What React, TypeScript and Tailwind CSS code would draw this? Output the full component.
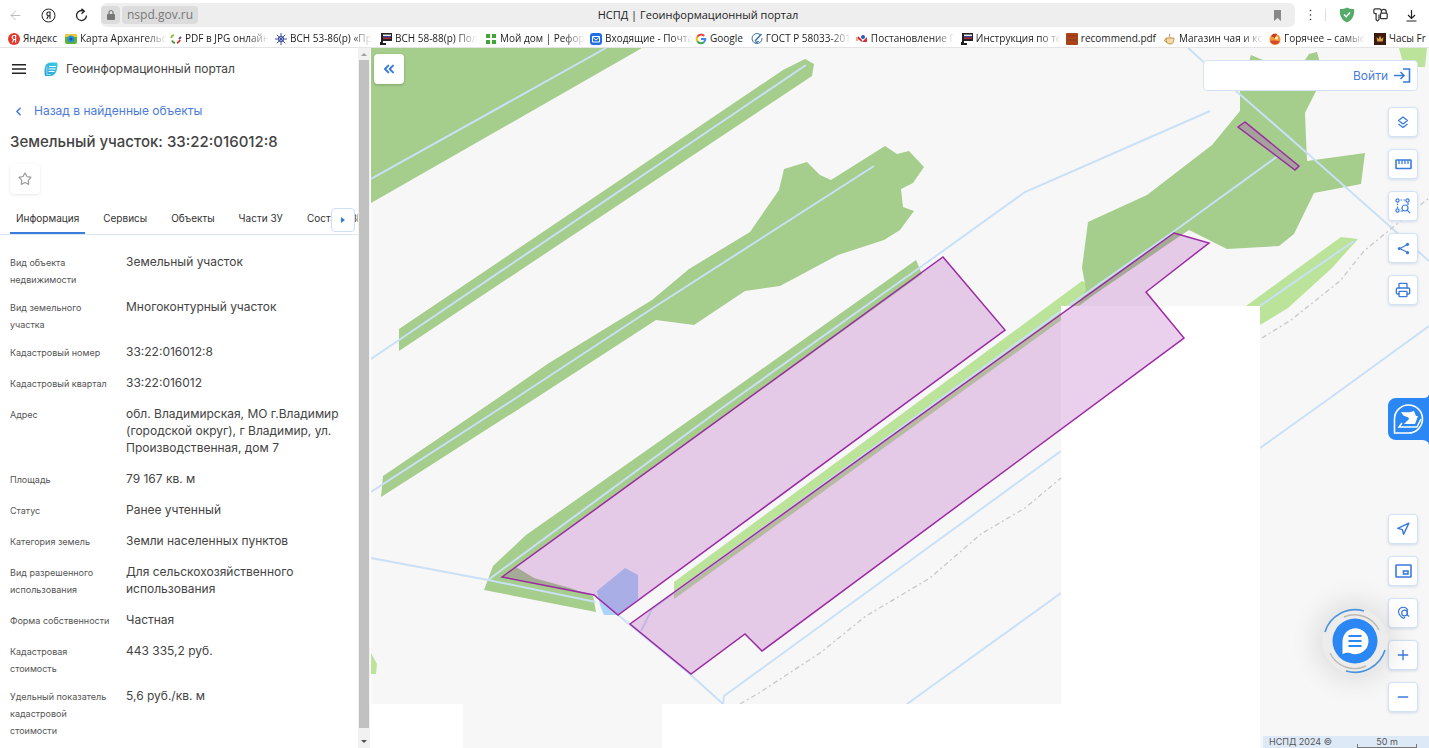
import type { ReactNode } from 'react';
import { ArrowLeft, ChevronLeft, ChevronsLeft, Minus, Navigation, Plus, Printer, Star } from 'lucide-react';

const MARK = 'w-3 h-3 shrink-0';

const bookmarks: { label: string; full?: boolean; icon: ReactNode }[] = [
  {
    label: 'Яндекс',
    full: true,
    icon: (
      <svg className={MARK} viewBox="0 0 12 12"><circle cx="6" cy="6" r="6" fill="#e5392f" /><path d="M7.600 9.600V2.500H6.400C5 2.500 4.200 3.300 4.200 4.400c0 1.100.6 1.700 1.700 2.100h1.700M5.900 6.500 4.200 9.600" fill="none" stroke="#fff" strokeWidth="1.100" /></svg>
    ),
  },
  {
    label: 'Карта Архангельс',
    icon: (
      <svg className={MARK} viewBox="0 0 12 12"><rect y="1" width="12" height="10" rx="2" fill="#5cb531" /><path d="M0 3a2 2 0 0 1 2-2h8a2 2 0 0 1 2 2v1H0z" fill="#f0c93a" /><circle cx="6" cy="6" r="3.500" fill="#2c8ed6" /><circle cx="6" cy="6" r="1.500" fill="#1958a8" /></svg>
    ),
  },
  {
    label: 'PDF в JPG онлайн',
    icon: (
      <svg className={MARK} viewBox="0 0 12 12" fill="none" strokeWidth="2"><path d="M1 5a4 4 0 0 1 3-3" stroke="#8bc53f" /><path d="M2 7.500A4 4 0 0 0 5 10" stroke="#3f9c35" /><path d="M7 10a5 5 0 0 0 3-3" stroke="#d8322f" /><path d="M9 6l2-2" stroke="#6a4ba0" /></svg>
    ),
  },
  {
    label: 'ВСН 53-86(р) «Пр',
    icon: (
      <svg className={MARK} viewBox="0 0 12 12" fill="none" stroke="#3f51a3"><path d="M6 0v12M0 6h12M1.800 1.800l8.400 8.400M10.200 1.800l-8.400 8.400" /><circle cx="6" cy="6" r="2.700" /></svg>
    ),
  },
  { label: 'ВСН 58-88(р) Пол', icon: <FlagMark /> },
  {
    label: 'Мой дом | Рефор',
    icon: (
      <svg className={MARK} viewBox="0 0 12 12" fill="#3fa535"><path d="M1 1h4v4H1zM7 1h4v4H7zM1 7h4v4H1zM7 7h4v4H7z" /></svg>
    ),
  },
  {
    label: 'Входящие - Почта',
    icon: (
      <svg className={MARK} viewBox="0 0 12 12"><rect width="12" height="12" rx="3" fill="#1f6fe5" /><path d="M2.500 3.500h7v5.500h-7zM2.500 4l3.500 3 3.500-3" fill="none" stroke="#fff" /></svg>
    ),
  },
  {
    label: 'Google',
    full: true,
    icon: (
      <svg className={MARK} viewBox="0 0 12 12" fill="none" strokeWidth="2"><path d="M9.200 3A4.200 4.200 0 0 0 2.400 3.800" stroke="#ea4335" /><path d="M2.400 3.800a4.200 4.200 0 0 0 0 4.400" stroke="#fbbc05" /><path d="M2.400 8.200A4.200 4.200 0 0 0 8.800 9.200" stroke="#34a853" /><path d="M8.800 9.200A4.200 4.200 0 0 0 10.200 6H6" stroke="#4285f4" /></svg>
    ),
  },
  {
    label: 'ГОСТ Р 58033-201',
    icon: (
      <svg className={MARK} viewBox="0 0 12 12" fill="none" stroke="#3a6ea8"><path d="M9 1.500a5 5 0 1 0 2 3.500" /><path d="m4 8 6.500-7M4.500 9c1 .5 2.500 0 3-1" strokeWidth="1.400" /></svg>
    ),
  },
  {
    label: 'Постановление Г',
    icon: (
      <svg className={MARK} viewBox="0 0 12 12"><path d="M0 4h2v4H0z" fill="#f3a08c" /><path d="M2 3l4 4v2L2 6z" fill="#cf2c2c" /><circle cx="7" cy="4" r="2" fill="#2a5bb8" /><path d="M6 9l5-5v5z" fill="#d12f3c" /></svg>
    ),
  },
  { label: 'Инструкция по те', icon: <FlagMark /> },
  {
    label: 'recommend.pdf',
    full: true,
    icon: <svg className={MARK} viewBox="0 0 12 12"><rect y="0" width="12" height="12" rx="1" fill="#a9441c" /><path d="M1 3h10M1 7h10" stroke="#8f3616" /></svg>,
  },
  {
    label: 'Магазин чая и ко',
    icon: (
      <svg className={MARK} viewBox="0 0 12 12"><path d="M2 5h8c0 4-1 6-4 6S2 9 2 5z" fill="#f4d9a8" stroke="#b9812f" strokeWidth=".8" /><path d="M2.500 6C0 5.500 0 9 3 9" fill="none" stroke="#b9812f" /><path d="M5 1c2 1-1 2 1 3.500" fill="none" stroke="#c66b3d" /></svg>
    ),
  },
  {
    label: 'Горячее – самые',
    icon: (
      <svg className={MARK} viewBox="0 0 12 12"><circle cx="6" cy="6.500" r="5.500" fill="#f39a32" /><path d="M1 8c3-1 7 0 10 0a5.500 5.500 0 0 1-10 0z" fill="#d9482b" /><path d="M2 3c2-3 5-3 6-2L6 5z" fill="#c83b26" /><circle cx="7.500" cy="5" r="1.500" fill="#fff3d6" /></svg>
    ),
  },
  {
    label: 'Часы Fr',
    full: true,
    icon: (
      <svg className={MARK} viewBox="0 0 12 12"><rect width="12" height="12" fill="#3d1a10" /><path d="M2.500 4 4.500 6 6 2.500 7.500 6l2-2-.8 4.500H3.300z" fill="#d7a445" /></svg>
    ),
  },
];

const tabs = ['Информация', 'Сервисы', 'Объекты', 'Части ЗУ', 'Состав ЕЗП'];

const details = [
  ['Вид объекта недвижимости', 'Земельный участок'],
  ['Вид земельного участка', 'Многоконтурный участок'],
  ['Кадастровый номер', '33:22:016012:8'],
  ['Кадастровый квартал', '33:22:016012'],
  ['Адрес', 'обл. Владимирская, МО г.Владимир (городской округ), г Владимир, ул. Производственная, дом 7'],
  ['Площадь', '79 167 кв. м'],
  ['Статус', 'Ранее учтенный'],
  ['Категория земель', 'Земли населенных пунктов'],
  ['Вид разрешенного использования', 'Для сельскохозяйственного использования'],
  ['Форма собственности', 'Частная'],
  ['Кадастровая стоимость', '443 335,2 руб.'],
  ['Удельный показатель кадастровой стоимости', '5,6 руб./кв. м'],
];

function FlagMark() {
  return (
    <svg className={MARK} viewBox="0 0 12 12"><path d="M1 0h11v8H3v2h3v2H0V9h1z" fill="#222" /><path d="M3 1.500h8v1.500H3z" fill="#e8e8ee" /><path d="M3 3h8v1.500H3z" fill="#384a9c" /><path d="M3 4.500h8V6H3z" fill="#b52a3b" /></svg>
  );
}

const BrowserBar = () => (
  <header className="shrink-0 bg-white border-b border-[#e4e4e4] font-['Open_Sans','Noto_Sans',sans-serif] text-[#222]">
    <div className="flex items-center h-[30px] pl-2">
      <button aria-label="Назад" className="w-4 text-[#b9b9b9]"><ArrowLeft size={15} strokeWidth={1.500} /></button>
      <button aria-label="Яндекс" className="ml-[17px] w-4">
        <svg width="15" height="15" viewBox="0 0 15 15" fill="none" stroke="#222"><circle cx="7.500" cy="7.500" r="6.500" /><path d="M9 11V4H7.800C6.500 4 5.800 4.800 5.800 5.900c0 1 .7 1.800 2 1.800H9M7.500 7.800 5.700 11" strokeWidth="1.100" /></svg>
      </button>
      <button aria-label="Обновить" className="ml-[17px] w-4">
        <svg width="15" height="15" viewBox="0 0 15 15" fill="none" stroke="#222" strokeWidth="1.300"><path d="M10 3.200A5 5 0 1 0 12.500 7.500M7.500 .8 10.300 3.300 7.500 5.800" /></svg>
      </button>
      <div className="relative flex items-center flex-1 min-w-0 h-6 ml-[11px] rounded-md bg-[#eee] text-xs">
        <span className="flex items-center justify-center w-[19px] h-[18px] rounded bg-[#dcdcdc]">
          <svg width="10" height="12" viewBox="0 0 10 12"><rect x="1" y="5" width="8" height="6" rx="1" fill="#777" /><path d="M3 5V3.500a2 2 0 0 1 4 0V5" fill="none" stroke="#777" strokeWidth="1.200" /></svg>
        </span>
        <span className="ml-0.5 px-[5px] h-[18px] leading-[18px] rounded bg-[#dcdcdc] text-[#777]">nspd.gov.ru</span>
        <h1 className="absolute inset-x-0 text-center text-[11px] pointer-events-none">НСПД | Геоинформационный портал</h1>
        <button aria-label="В закладки" className="ml-auto mr-[13px]">
          <svg width="9" height="11" viewBox="0 0 9 11" fill="#888"><path d="M1 0h7v11L4.500 8 1 11z" /></svg>
        </button>
      </div>
      <button aria-label="Меню" className="ml-[13px]">
        <svg width="5" height="12" viewBox="0 0 5 12" fill="#333"><circle cx="2.500" cy="1.500" r=".8" /><circle cx="2.500" cy="6" r=".8" /><circle cx="2.500" cy="10.500" r=".8" /></svg>
      </button>
      <span className="w-px h-3 ml-3 bg-[#ddd]" />
      <button aria-label="Защита" className="ml-[13px]">
        <svg width="16" height="16" viewBox="0 0 16 16"><path d="M8 .5c2 1 4.500 1.500 7 1.500 1 6-2 11.500-7 13.500C3 13.500 0 8 1 2 3.500 2 6 1.500 8 .5z" fill="#55ab68" /><path d="m5 7.500 2.200 2.300L11 5.500" fill="none" stroke="#fff" strokeWidth="1.400" /></svg>
      </button>
      <button aria-label="Пароли" className="ml-[18px]">
        <svg width="15" height="14" viewBox="0 0 15 14" fill="none" stroke="#333" strokeWidth="1.200"><path d="M8.500 2.800C8 1.500 7.500.8 6.500.8H2.300C1.400.8.8 1.500.8 2.300v2c0 .8.6 1.400 1.400 1.400h.9v6l1.400 1.300L6 11.500V6.500" /><path d="M8.300 5V3.800a2.500 2.500 0 0 1 5 0V5" /><rect x="7.500" y="5.200" width="6.700" height="5.500" rx="1" /></svg>
      </button>
      <button aria-label="Загрузки" className="ml-[18px] mr-[12px]">
        <svg width="11" height="13" viewBox="0 0 11 13" fill="none" stroke="#222" strokeWidth="1.200"><path d="M5.500 1v8M2 6l3.500 3.500L9 6M.5 12h10" /></svg>
      </button>
    </div>
    <nav className="flex items-center gap-2 h-[17px] pl-2 overflow-hidden text-[10px] leading-[17px]">
      {bookmarks.map((b) => (
        <a key={b.label} href="#" className={b.full ? 'flex items-center gap-[3px] shrink-0' : 'flex items-center gap-[3px] shrink-0 w-[97px]'}>
          {b.icon}
          <span className={b.full ? 'whitespace-nowrap' : 'whitespace-nowrap [mask-image:linear-gradient(to_right,black_75%,transparent)]'}>{b.label}</span>
        </a>
      ))}
    </nav>
  </header>
);

const Sidebar = () => (
  <aside className="flex shrink-0 w-[371px] bg-white text-[#444]">
    <div className="flex-1 min-w-0 overflow-hidden">
      <div className="flex items-center h-[42px] pl-3 text-xs">
        <button aria-label="Меню">
          <svg width="14" height="10" viewBox="0 0 14 10" fill="#222"><path d="M0 0h14v1.500H0zM0 4.200h14v1.500H0zM0 8.400h14v1.500H0z" /></svg>
        </button>
        <svg className="ml-[18px]" width="14" height="15" viewBox="0 0 14 15">
          <defs><linearGradient id="brand" x1="0" y1="1" x2="1" y2="0"><stop stopColor="#2d9cdb" /><stop offset="1" stopColor="#38d0e6" /></linearGradient></defs>
          <path d="M1 5c.8-3 3-4.500 6-4.500h6c1 2 .5 4 0 6-.4 4-2.500 7-6.500 7.500H1C.3 11 .3 8 1 5z" fill="url(#brand)" />
          <path d="M5 4.500h7M4.500 7h7M4.500 9.500h6" stroke="#fff" strokeWidth="1.100" />
          <path d="M2.800 4.500v8h4" stroke="#bfe8f7" strokeWidth=".8" fill="none" />
        </svg>
        <span className="ml-2">Геоинформационный портал</span>
      </div>
      <a href="#" className="flex items-center h-[42px] pl-3 text-xs text-[#4b7bdc]">
        <ChevronLeft size={13} strokeWidth={3} />
        <span className="ml-[9px]">Назад в найденные объекты</span>
      </a>
      <h2 className="pl-[10px] text-[15px] leading-5 font-medium">Земельный участок: 33:22:016012:8</h2>
      <button aria-label="В избранное" className="flex items-center justify-center w-[30px] h-[30px] mt-3 ml-[10px] rounded-sm text-[#999] shadow-[0_1px_3px_rgba(0,0,0,0.1)]">
        <Star size={14} strokeWidth={2} />
      </button>
      <div className="relative mt-2 border-b border-[#d9e6f5]">
        <div role="tablist" className="flex overflow-hidden pl-[10px] gap-3 text-[10px] text-[#333]">
          {tabs.map((t, i) => (
            <button
              key={t}
              role="tab"
              aria-selected={i === 0}
              className={i === 0 ? 'shrink-0 h-[32px] pt-0.5 px-[6px] border-b-2 border-[#3b7ddd]' : 'shrink-0 h-[32px] pt-0.5 px-[6px] border-b-2 border-transparent'}
            >
              {t}
            </button>
          ))}
        </div>
        <button aria-label="Ещё вкладки" className="absolute right-[3px] top-[6px] flex items-center justify-center w-6 h-6 rounded-sm border border-[#cfe0f5] bg-white">
          <svg width="4" height="6" viewBox="0 0 4 6" fill="#2f7bdc"><path d="M0 0l4 3-4 3z" /></svg>
        </button>
      </div>
      <table className="w-full mt-[11px] table-fixed text-left">
        <tbody>
          {details.map(([label, value]) => (
            <tr key={label} className="align-top">
              <th scope="row" className="w-[126px] pl-[10px] pr-3 pt-2 pb-[3px] text-[9px] leading-[17px] font-normal text-[#555]">{label}</th>
              <td className="pr-[14px] py-[7px] text-xs leading-[17px]">{value}</td>
            </tr>
          ))}
        </tbody>
      </table>
    </div>
    <div className="flex flex-col items-center w-3 mr-px bg-[#f1f1f1]" aria-hidden="true">
      <svg className="shrink-0 h-3" width="6" height="12" viewBox="0 0 6 12" fill="#a0a0a0"><path d="M0 8l3-3 3 3z" /></svg>
      <div className="flex-1 w-[10px] bg-[#c1c1c1]" />
      <svg className="shrink-0 h-5" width="6" height="20" viewBox="0 0 6 20" fill="#505050"><path d="M0 12l3 3 3-3z" /></svg>
    </div>
  </aside>
);

const MapCanvas = () => (
  <svg className="absolute inset-0 w-full h-full" viewBox="371 48 1058 700" preserveAspectRatio="xMinYMin slice" aria-hidden="true">
    <rect x="371" y="48" width="1058" height="700" fill="#f7f7f7" />
    <g fill="#bbe39a">
      <path d="M674 582 1082 281 1100 290 1060 321 674 599z" />
      <path d="M1246 306 1341 237 1358 239 1332 268 1288 308 1260 325z" />
      <path d="M1399 48 1404 67 1425 67 1427 48z" />
      <path d="M371 653 377 664 376 674H371z" />
    </g>
    <g fill="#a5cd8b">
      <path d="M371 48H642L371 203z" />
      <path d="M399 329 783 70 805 59 814 64 812 76 399 351z" />
      <path d="M383 476 498 398 549 363 652 300 689 269 750 232 779 190 784 169 807 162 820 175 831 180 885 146 897 154 909 151 924 167 913 183 901 189 903 207 914 211 900 230 884 240 838 255 780 286 745 291 694 325 656 320 536 398 381 497z" />
      <path d="M916 260 922 274 516 567 534 578 570 588 593 596 596 612 484 590 493 566 526 535 721 398z" />
      <path d="M1082 268 1088 222 1147 195 1212 145 1240 111V91L1251 55 1270 63H1303L1309 54 1317 52 1320 63 1316 91 1305 113 1307 161 1365 153 1361 184 1314 193 1294 234 1279 246 1227 249 1189 230 1177 238 1079 305 1086 289z" />
    </g>
    <path d="M625 568 638 575V599L618 615H604L600 605 597 591z" fill="#aad3f8" />
    <g fill="none" stroke="#c9e0f6" strokeWidth="2">
      <path d="M371 179 606 48" />
      <path d="M371 359 399 340 806 65" />
      <path d="M371 492 516 398 656 306 874 166" />
      <path d="M371 558 488 580 596 602" />
      <path d="M488 580 722 408 922 266 1025 192 1210 111" />
      <path d="M618 615 691 675 723 704 724 696 1061 451" />
      <path d="M652 609 1061 311 1173 232 1278 156" />
      <path d="M652 609 641 631" />
      <path d="M907 704 1061 593" />
      <path d="M1188 48 1236 91 1307 153 1429 261" />
      <path d="M1260 306 1354 241" />
      <path d="M1260 448 1330 398 1429 326" />
    </g>
    <g fill="none" stroke="#c8c8c8" strokeWidth="1.300" strokeDasharray="5 3 2 3">
      <path d="M740 704 759 693 820 653 866 616 930 578 981 534 1025 508 1061 478" />
      <path d="M1262 338 1291 320 1340 281 1364 251 1398 223 1429 198" />
    </g>
    {/* tiles that have not loaded */}
    <path d="M371 704h92v44h-92zM662 704h399V306h199v442H662z" fill="#fff" />
    <g fill="#a83cb4" fillOpacity=".24" stroke="#9c2aa3" strokeWidth="1.500">
      <path d="M943 257 1005 330 618 615 594 595 502 577z" />
      <path d="M1174 233 1209 243 1146 292 1184 338 762 651 745 634 691 674 630 624z" />
      <path d="M1245 122 1238 127 1295 170 1299 166z" fill="#a86cb0" fillOpacity=".45" />
    </g>
  </svg>
);

const ToolButton = ({ label, children }: { label: string; children: ReactNode }) => (
  <button aria-label={label} className="flex items-center justify-center w-[30px] h-[30px] rounded-sm border border-[#d3e3f5] bg-white text-[#3b7bdc] shadow-[0_1px_3px_rgba(60,110,180,0.2)]">
    {children}
  </button>
);

const MapView = () => (
  <main className="relative flex-1 min-w-0 overflow-hidden">
    <MapCanvas />

    <button aria-label="Свернуть панель" className="absolute left-[3px] top-[6px] flex items-center justify-center w-[30px] h-[30px] rounded-sm bg-white text-[#3b7bdc] shadow-[0_1px_3px_rgba(0,0,0,0.2)]">
      <ChevronsLeft size={16} strokeWidth={3} />
    </button>

    <button className="absolute right-[11px] top-3 flex items-center justify-end gap-[6px] w-[215px] h-[31px] pr-[6px] rounded-sm border border-[#d3e3f5] bg-white text-xs text-[#4b7bdc]">
      Войти
      <svg width="17" height="15" viewBox="0 0 17 15" fill="none" stroke="#3b7bdc" strokeWidth="1.600"><path d="M0 7.500h10M6.500 4l3.500 3.500L6.500 11M9 1h6.500v13H9" /></svg>
    </button>

    <div className="absolute right-[11px] top-[59px] flex flex-col gap-3">
      <ToolButton label="Слои">
        <svg width="12" height="13" viewBox="0 0 12 13" fill="none" stroke="currentColor" strokeWidth="1.300" strokeLinejoin="round"><path d="M6 1 10.500 4.500 6 8 1.500 4.500zM1.500 8 6 11.500 10.500 8" /></svg>
      </ToolButton>
      <ToolButton label="Линейка">
        <svg width="17" height="11" viewBox="0 0 17 11" fill="none" stroke="currentColor" strokeWidth="1.600"><rect x="1" y="1" width="15" height="8.500" rx=".5" /><path d="M4 1v4M7 1v4M10 1v4M13 1v4" strokeWidth="1.300" /></svg>
      </ToolButton>
      <ToolButton label="Поиск по области">
        <svg width="16" height="16" viewBox="0 0 16 16" fill="none" stroke="currentColor" strokeWidth="1.200"><circle cx="2.500" cy="2.500" r="1.600" /><circle cx="12.500" cy="2.500" r="1.600" /><circle cx="2.500" cy="12.500" r="1.600" /><path d="M5.500 2h1.500M8.500 2H10M2.500 5.500V7M2.500 8.500V10M5.500 13H8M13 5v2" /><circle cx="10" cy="10" r="3" /><path d="m12.200 12.200 3 3" /></svg>
      </ToolButton>
      <ToolButton label="Поделиться">
        <svg width="13" height="13" viewBox="0 0 13 13" fill="none" stroke="currentColor" strokeWidth="1.200"><path d="M3 6.500 10.500 2.500M3 6.500 10.500 10.500" /><g fill="currentColor" stroke="none"><circle cx="2.300" cy="6.500" r="1.600" /><circle cx="10.500" cy="2.300" r="1.600" /><circle cx="10.500" cy="10.700" r="1.600" /></g></svg>
      </ToolButton>
      <ToolButton label="Печать"><Printer size={16} /></ToolButton>
    </div>

    <button aria-label="Роскадастр" className="absolute right-0 top-[342px] w-[45px] h-[58px]">
      <svg width="45" height="58" viewBox="0 0 45 58">
        <path d="M45 4c0 2-2 4-5 4H12c-4 0-8 3-8 8v26c0 5 4 8 8 8h25c5 0 8 2 8 5z" fill="#2a87f3" />
        <path d="M10.500 43V29.500A14 14 0 1 1 24.500 43z" fill="none" stroke="#fff" strokeWidth="1.600" />
        <path d="M17 22c4 0 8 1 13-1l2 5h2l-3 8H20l5-5c0-3-5-2-6-4z" fill="#fff" />
        <path d="m18 33-3 4h18l4-8" fill="none" stroke="#fff" strokeWidth="1.500" />
      </svg>
    </button>

    <div className="absolute right-[11px] bottom-[36px] flex flex-col gap-3">
      <ToolButton label="Моё местоположение"><Navigation size={14} strokeWidth={2.500} /></ToolButton>
      <ToolButton label="Обзорная карта">
        <svg width="17" height="14" viewBox="0 0 17 14" fill="none" stroke="currentColor" strokeWidth="1.600"><rect x="1" y="1" width="15" height="12" rx=".5" /><rect x="8.500" y="7" width="4.500" height="3" /></svg>
      </ToolButton>
      <ToolButton label="Что здесь">
        <svg width="13" height="14" viewBox="0 0 13 14" fill="none" stroke="currentColor" strokeWidth="1.200"><path d="M6.500 12.500C3.500 10.500 1.500 8 1.500 5.500a4.800 4.800 0 0 1 9.300-1" /><circle cx="7.500" cy="7" r="2.800" /><path d="M10.300 4.500V9l1.700 1.500M6.500 12.500 8 11" /></svg>
      </ToolButton>
      <ToolButton label="Приблизить"><Plus size={16} strokeWidth={2} /></ToolButton>
      <ToolButton label="Отдалить"><Minus size={16} strokeWidth={2} /></ToolButton>
    </div>

    <button aria-label="Чат" className="absolute right-[41px] bottom-[74px] w-[66px] h-[66px] rounded-full bg-[#ececec] shadow-[0_0_28px_6px_rgba(0,0,0,0.11)]">
      <svg width="66" height="66" viewBox="0 0 66 66" fill="none">
        <circle cx="33" cy="33" r="22.500" fill="#2a87f3" />
        <path d="M20.500 46V33A13 13 0 1 1 28 45c-2-.6-4-.5-7.500 1z" fill="#fff" />
        <path d="M26.500 28h13M26.500 33h13M26.500 38h13" stroke="#2a87f3" strokeWidth="1.800" />
        <path d="M3 24A31.500 31.500 0 0 1 42 3M63 42A31.500 31.500 0 0 1 24 63" stroke="#4c93de" strokeWidth="1.600" />
        <path d="M22 9A27 27 0 0 1 57 22M8 45A27 27 0 0 0 44 58" stroke="#bcbab2" strokeWidth="1.400" />
      </svg>
    </button>

    <div className="absolute right-0 bottom-0 flex items-end justify-between w-[166px] h-3 pl-[6px] pr-3 bg-[#dde9f6] text-[9px] leading-3 text-[#555]">
      <span>НСПД 2024 ©</span>
      <span className="relative w-[60px] text-center">
        50 m
        <span className="absolute inset-x-0 bottom-0 h-1 border border-t-0 border-[#777]" />
      </span>
    </div>
  </main>
);

export default function App() {
  return (
    <div className="flex flex-col h-screen overflow-hidden bg-white font-['Inter','Noto_Sans',sans-serif]">
      <BrowserBar />
      <div className="flex flex-1 min-h-0">
        <Sidebar />
        <MapView />
      </div>
    </div>
  );
}
